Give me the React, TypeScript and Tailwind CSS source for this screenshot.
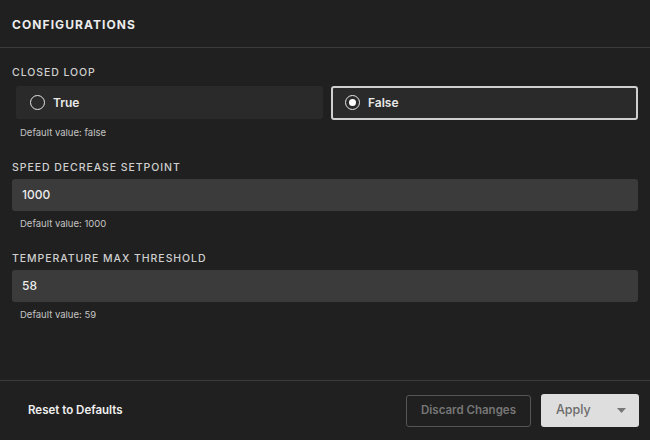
import React, { useState } from 'react';

const font = { fontFamily: 'Inter, "Noto Sans", sans-serif' };

const RadioOption: React.FC<{ label: string; checked: boolean; onSelect: () => void }> = ({ label, checked, onSelect }) => (
  <button
    type="button"
    onClick={onSelect}
    className={
      checked
        ? 'flex-1 h-[34px] flex items-center gap-[8px] pl-[12px] rounded-[3px] bg-[#2a2a2a] border-2 border-[#cfcfcf] text-left'
        : 'flex-1 h-[33px] flex items-center gap-[8px] pl-[12px] rounded-[3px] bg-[#2a2a2a] border-2 border-transparent text-left'
    }
  >
    <span className="w-[15px] h-[15px] rounded-full border-[1.5px] border-[#e6e6e6] flex items-center justify-center">
      {checked && <span className="w-[7px] h-[7px] rounded-full bg-white" />}
    </span>
    <span className="text-[12px] font-semibold text-[#e8e8e8]">{label}</span>
  </button>
);

const Field: React.FC<{ label: string; value: string; hint: string; onChange: (v: string) => void }> = ({ label, value, hint, onChange }) => (
  <div>
    <div className="text-[10.5px] font-medium tracking-[0.09em] text-[#cfcfcf] uppercase leading-none">{label}</div>
    <input
      type="text"
      value={value}
      onChange={e => onChange(e.target.value)}
      className="mt-[5px] block w-full h-[32px] rounded-[3px] bg-[#3b3b3b] px-[10px] text-[12px] font-medium text-[#ececec] outline-none"
    />
    <div className="mt-[8px] pl-[8px] text-[9.5px] text-[#c4c4c4] leading-none">{hint}</div>
  </div>
);

export default function App() {
  const [closedLoop, setClosedLoop] = useState(false);
  const [speed, setSpeed] = useState('1000');
  const [temp, setTemp] = useState('58');

  return (
    <div style={font} className="w-[650px] h-[440px] bg-[#202020] flex flex-col">
      <div className="h-[48px] border-b border-[#3a3a3a] flex items-center px-[12px] pt-[3px]">
        <h2 className="text-[12px] font-bold tracking-[0.09em] text-[#ececec]">CONFIGURATIONS</h2>
      </div>

      <div className="flex-1 px-[12px] pt-[20px]">
        <div className="text-[10.5px] font-medium tracking-[0.09em] text-[#cfcfcf] leading-none">CLOSED LOOP</div>
        <div className="mt-[7px] flex items-center gap-[8px] pl-[4px]">
          <RadioOption label="True" checked={closedLoop} onSelect={() => setClosedLoop(true)} />
          <RadioOption label="False" checked={!closedLoop} onSelect={() => setClosedLoop(false)} />
        </div>
        <div className="mt-[8px] pl-[8px] text-[9.5px] text-[#c4c4c4] leading-none">Default value: false</div>

        <div className="mt-[26px] flex flex-col gap-[26px]">
          <Field label="Speed Decrease Setpoint" value={speed} hint="Default value: 1000" onChange={setSpeed} />
          <Field label="Temperature Max Threshold" value={temp} hint="Default value: 59" onChange={setTemp} />
        </div>
      </div>

      <div className="h-[60px] border-t border-[#3a3a3a] flex items-center justify-between pl-[28px] pr-[11px]">
        <button type="button" className="text-[11.5px] font-semibold text-[#f0f0f0]">Reset to Defaults</button>
        <div className="flex items-center gap-[10px]">
          <button type="button" className="w-[125px] h-[32px] rounded-[3px] border border-[#555] text-[11.5px] font-semibold text-[#777]">
            Discard Changes
          </button>
          <button type="button" className="w-[98px] h-[33px] rounded-[3px] bg-[#dedede] flex items-center justify-between pl-[15px] pr-[13px] text-[12.5px] font-medium text-[#6a6a6a]">
            Apply
            <svg width="9" height="5" viewBox="0 0 9 5"><path d="M0 0h9L4.5 5z" fill="#777" /></svg>
          </button>
        </div>
      </div>
    </div>
  );
}
